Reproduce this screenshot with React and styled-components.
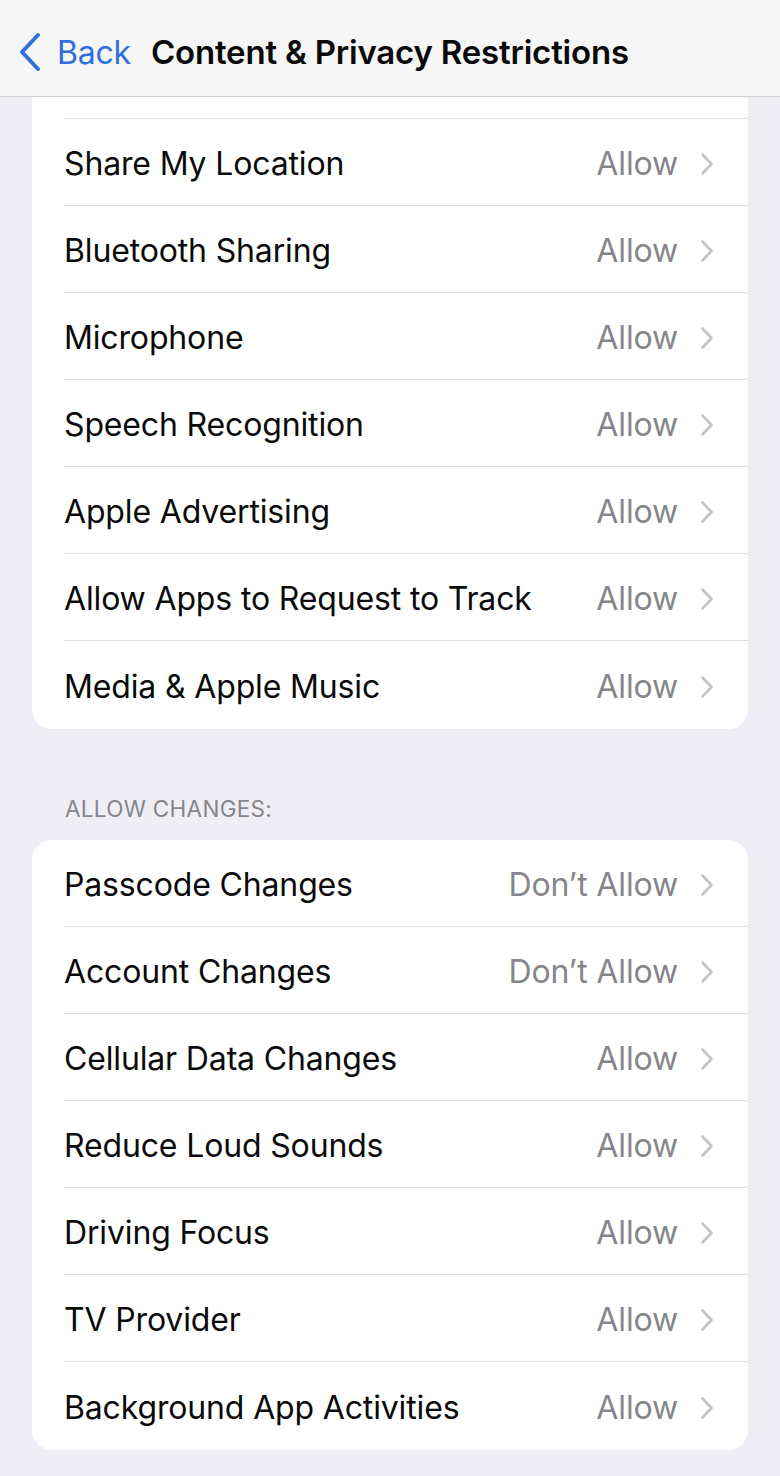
import React from 'react';
import styled, { createGlobalStyle } from 'styled-components';

const GlobalStyle = createGlobalStyle`
  body {
    margin: 0;
    background: #efeef4;
    font-family: Inter, "Noto Sans", "Liberation Sans", sans-serif;
    -webkit-font-smoothing: antialiased;
  }
`;

const topRows = [
  ['Share My Location', 'Allow'],
  ['Bluetooth Sharing', 'Allow'],
  ['Microphone', 'Allow'],
  ['Speech Recognition', 'Allow'],
  ['Apple Advertising', 'Allow'],
  ['Allow Apps to Request to Track', 'Allow'],
  ['Media & Apple Music', 'Allow'],
];

const changeRows = [
  ['Passcode Changes', 'Don\u2019t Allow'],
  ['Account Changes', 'Don\u2019t Allow'],
  ['Cellular Data Changes', 'Allow'],
  ['Reduce Loud Sounds', 'Allow'],
  ['Driving Focus', 'Allow'],
  ['TV Provider', 'Allow'],
  ['Background App Activities', 'Allow'],
];

function Chevron() {
  return (
    <svg width="14" height="24" viewBox="0 0 14 24">
      <path d="M2.5 2.5 L11.5 12 L2.5 21.5" fill="none" stroke="#c4c4c8" strokeWidth="2.6" strokeLinecap="round" strokeLinejoin="round" />
    </svg>
  );
}

function BackChevron() {
  return (
    <svg width="24" height="40" viewBox="0 0 24 40">
      <path d="M20 3 L4 20 L20 37" fill="none" stroke="#2f6fdc" strokeWidth="4" strokeLinecap="round" strokeLinejoin="round" />
    </svg>
  );
}

function SettingRow({ label, value }) {
  return (
    <Row>
      <Label>{label}</Label>
      <Value>{value}</Value>
      <Chevron />
    </Row>
  );
}

export default function App() {
  return (
    <Page>
      <GlobalStyle />
      <NavBar>
        <BackButton>
          <BackChevron />
          <BackText>Back</BackText>
        </BackButton>
        <Title>Content &amp; Privacy Restrictions</Title>
      </NavBar>

      <Content>
        <Card $clipped>
          <PartialRow />
          {topRows.map(([label, value]) => (
            <SettingRow key={label} label={label} value={value} />
          ))}
        </Card>

        <SectionHeader>Allow Changes:</SectionHeader>
        <Card>
          {changeRows.map(([label, value]) => (
            <SettingRow key={label} label={label} value={value} />
          ))}
        </Card>
      </Content>
    </Page>
  );
}

// Styles

const Page = styled.div`
  width: 780px;
  min-height: 1476px;
  background: #efeef4;
`;

const NavBar = styled.div`
  height: 97px;
  box-sizing: border-box;
  display: flex;
  align-items: center;
  padding: 8px 0 0 18px;
  background: #f6f6f6;
  border-bottom: 1px solid #cfcfd1;
`;

const BackButton = styled.div`
  display: flex;
  align-items: center;
  gap: 15px;
  margin-right: 20px;
`;

const BackText = styled.span`
  font-size: 32px;
  color: #2f6fdc;
  letter-spacing: -0.2px;
`;

const Title = styled.span`
  font-size: 33px;
  font-weight: 600;
  color: #0a0a0a;
  letter-spacing: -0.2px;
`;

const Content = styled.div`
  padding: 0 32px;
`;

const Card = styled.div`
  background: #ffffff;
  border-radius: ${p => (p.$clipped ? '0 0 20px 20px' : '20px')};
  padding-left: 32px;
  overflow: hidden;
`;

const PartialRow = styled.div`
  height: 21px;
  border-bottom: 1px solid #dedee0;
`;

const Row = styled.div`
  box-sizing: border-box;
  height: 87px;
  display: flex;
  align-items: center;
  padding: 3px 34px 0 0;
  border-bottom: 1px solid #dedee0;

  &:last-child {
    border-bottom: none;
    height: 88px;
  }
`;

const Label = styled.span`
  flex: 1;
  font-size: 32px;
  color: #0a0a0a;
  letter-spacing: -0.15px;
`;

const Value = styled.span`
  font-size: 32px;
  color: #86868a;
  letter-spacing: -0.15px;
  margin-right: 22px;
`;

const SectionHeader = styled.div`
  padding: 66px 0 17px 33px;
  font-size: 22.5px;
  line-height: 28px;
  text-transform: uppercase;
  color: #86868a;
  letter-spacing: 0.3px;
`;
